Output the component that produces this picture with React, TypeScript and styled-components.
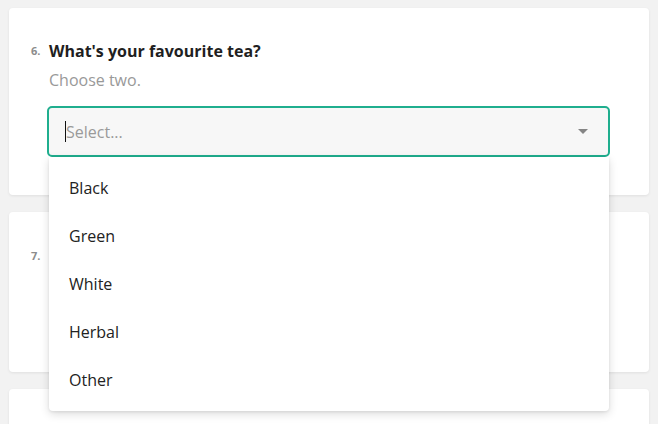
import * as React from 'react';
import styled, { createGlobalStyle } from 'styled-components';

const GlobalStyle = createGlobalStyle`
  html, body {
    margin: 0;
    padding: 0;
    background: #f2f2f2;
    font-family: 'Open Sans', 'Liberation Sans', sans-serif;
    overflow: hidden;
  }
`;

const Page = styled.div`
  display: flex;
  flex-direction: column;
  gap: 17px;
  padding: 8px 9px;
  height: 424px;
  box-sizing: border-box;
  overflow: hidden;
`;

const Card = styled.div<{ $height: number }>`
  flex-shrink: 0;
  position: relative;
  background: #fff;
  border-radius: 4px;
  box-shadow: 0 1px 3px rgba(0, 0, 0, 0.08);
  height: ${(p) => p.$height}px;
  box-sizing: border-box;
  padding: 31px 39px 0 22px;
  display: flex;
`;

const Num = styled.div<{ $top?: number }>`
  width: 18px;
  flex-shrink: 0;
  font-size: 11px;
  font-weight: 700;
  color: #8c8c8c;
  line-height: 24px;
  margin-top: ${(p) => p.$top || 0}px;
`;

const Body = styled.div`
  flex: 1;
  display: flex;
  flex-direction: column;
  margin-left: -2px;
`;

const Title = styled.div`
  font-size: 16px;
  font-weight: 700;
  color: #1f1f1f;
  line-height: 24px;
  padding-left: 2px;
`;

const Hint = styled.div`
  font-size: 16px;
  color: #999;
  line-height: 24px;
  margin-top: 5px;
  padding-left: 2px;
`;

const SelectWrap = styled.div`
  position: relative;
  margin-top: 14px;
  z-index: 5;
`;

const Control = styled.div`
  height: 51px;
  box-sizing: border-box;
  border: 2px solid #1fae8e;
  border-radius: 5px;
  background: #f7f7f7;
  display: flex;
  align-items: center;
  padding: 0 20px 0 16px;
`;

const Caret = styled.span`
  width: 1px;
  height: 21px;
  background: #111;
`;

const Placeholder = styled.span`
  flex: 1;
  font-size: 16px;
  color: #9a9a9a;
`;

const Arrow = styled.span`
  width: 0;
  height: 0;
  border-left: 5px solid transparent;
  border-right: 5px solid transparent;
  border-top: 5px solid #858585;
`;

const Menu = styled.div`
  position: absolute;
  top: 51px;
  left: 2px;
  right: 1px;
  background: #fff;
  border-radius: 0 0 4px 4px;
  box-shadow: 0 3px 10px rgba(0, 0, 0, 0.14), 0 1px 3px rgba(0, 0, 0, 0.08);
  padding: 7px 0;
`;

const Option = styled.div`
  height: 48px;
  display: flex;
  align-items: center;
  padding-left: 20px;
  font-size: 16px;
  color: #222;
`;

const options = ['Black', 'Green', 'White', 'Herbal', 'Other'];

export default function App() {
  return (
    <>
      <GlobalStyle />
      <Page>
        <Card $height={187}>
          <Num>6.</Num>
          <Body>
            <Title>What's your favourite tea?</Title>
            <Hint>Choose two.</Hint>
            <SelectWrap>
              <Control>
                <Caret />
                <Placeholder>Select...</Placeholder>
                <Arrow />
              </Control>
              <Menu>
                {options.map((o) => (
                  <Option key={o}>{o}</Option>
                ))}
              </Menu>
            </SelectWrap>
          </Body>
        </Card>
        <Card $height={160}>
          <Num $top={1}>7.</Num>
        </Card>
        <Card $height={120} />
      </Page>
    </>
  );
}
